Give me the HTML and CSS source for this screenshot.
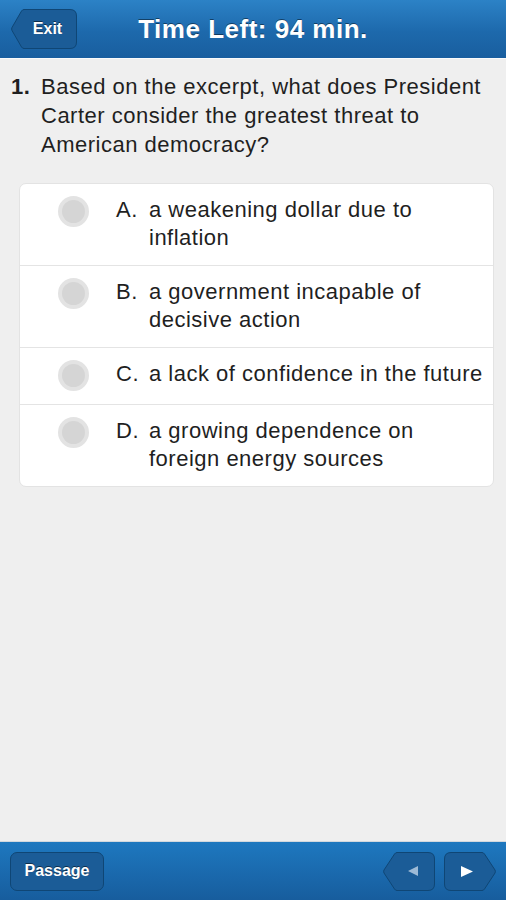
FILE: index.html
```html
<!DOCTYPE html>
<html lang="en">
<head>
    <meta charset="UTF-8">
    <meta name="viewport" content="width=device-width, initial-scale=1.0">
    <title>Practice Test</title>
    <link rel="stylesheet" href="styles.css">
</head>
<body>

<header class="topbar">
    <div class="topbar-left">
        <button class="shape-btn exit-btn">
            <svg class="shape-bg" viewBox="0 0 66 40" preserveAspectRatio="none">
                <path d="M13 0.5 H59 Q65.5 0.5 65.5 7 V33 Q65.5 39.5 59 39.5 H13 Q11.5 39.5 10.5 38 L1 21.5 Q0.2 20 1 18.5 L10.5 2 Q11.5 0.5 13 0.5 Z"/>
            </svg>
            <span class="btn-label">Exit</span>
        </button>
    </div>
    <h1 class="timer">Time Left: 94 min.</h1>
    <div></div>
</header>

<main class="content">
    <div class="question">
        <span class="q-num">1.</span>
        <p class="q-text">Based on the excerpt, what does President Carter consider the greatest threat to American democracy?</p>
    </div>

    <ul class="choices">
        <li class="choice">
            <span class="radio"></span>
            <span class="letter">A.</span>
            <span class="choice-text">a weakening dollar due to inflation</span>
        </li>
        <li class="choice">
            <span class="radio"></span>
            <span class="letter">B.</span>
            <span class="choice-text">a government incapable of decisive action</span>
        </li>
        <li class="choice">
            <span class="radio"></span>
            <span class="letter">C.</span>
            <span class="choice-text">a lack of confidence in the future</span>
        </li>
        <li class="choice">
            <span class="radio"></span>
            <span class="letter">D.</span>
            <span class="choice-text">a growing dependence on foreign energy sources</span>
        </li>
    </ul>
</main>

<footer class="bottombar">
    <button class="passage-btn">Passage</button>
    <div class="nav">
        <button class="shape-btn nav-btn">
            <svg class="shape-bg" viewBox="0 0 52 39" preserveAspectRatio="none">
                <path d="M14 0.5 H45 Q51.5 0.5 51.5 7 V32 Q51.5 38.5 45 38.5 H14 Q12.5 38.5 11.5 37 L1 21 Q0.2 19.5 1 18 L11.5 2 Q12.5 0.5 14 0.5 Z"/>
            </svg>
            <svg class="arrow arrow-off" viewBox="0 0 10 10"><path d="M10 0 V10 L0 5 Z"/></svg>
        </button>
        <button class="shape-btn nav-btn">
            <svg class="shape-bg" viewBox="0 0 52 39" preserveAspectRatio="none">
                <path d="M38 0.5 H7 Q0.5 0.5 0.5 7 V32 Q0.5 38.5 7 38.5 H38 Q39.5 38.5 40.5 37 L51 21 Q51.8 19.5 51 18 L40.5 2 Q39.5 0.5 38 0.5 Z"/>
            </svg>
            <svg class="arrow" viewBox="0 0 12 11"><path d="M0 0 V11 L12 5.5 Z"/></svg>
        </button>
    </div>
</footer>

</body>
</html>
```

FILE: styles.css
```css
* {
    box-sizing: border-box;
}
body {
    margin: 0;
    height: 100vh;
    display: flex;
    flex-direction: column;
    background-color: #efefef;
    font-family: "Liberation Sans", Arial, sans-serif;
    color: #1f1f1f;
}
button {
    font-family: inherit;
    border: none;
    background: none;
    padding: 0;
    cursor: pointer;
}

/* top bar */
.topbar {
    height: 59px;
    display: grid;
    grid-template-columns: 1fr auto 1fr;
    align-items: center;
    background: linear-gradient(#2c82c6, #1d69ac 55%, #195e9f);
    border-bottom: 1px solid #fafafa;
}
.topbar-left {
    padding-left: 11px;
    padding-bottom: 1px;
}
.timer {
    margin: 0;
    font-size: 26px;
    letter-spacing: 0.5px;
    font-weight: bold;
    color: #fff;
    text-shadow: 0 -1px 0 rgba(0, 0, 0, 0.45);
}

/* shaped buttons drawn with an svg behind the label */
.shape-btn {
    position: relative;
    display: flex;
    align-items: center;
    justify-content: center;
}
.shape-bg {
    position: absolute;
    top: 0;
    left: 0;
    width: 100%;
    height: 100%;
}
.shape-bg path {
    fill: #1b5c97;
    stroke: #0f4675;
    stroke-width: 1;
}
.exit-btn {
    width: 66px;
    height: 40px;
    padding-left: 7px;
}
.btn-label {
    position: relative;
    color: #fff;
    font-weight: bold;
    font-size: 16px;
    text-shadow: 0 -1px 0 rgba(0, 0, 0, 0.5);
}

/* question */
.content {
    flex: 1;
    padding: 13px 12px 0 11px;
}
.question {
    display: flex;
    font-size: 22px;
    letter-spacing: 0.5px;
    line-height: 29px;
}
.q-num {
    width: 30px;
    flex-shrink: 0;
    font-weight: bold;
}
.q-text {
    margin: 0;
}

/* answer choices */
.choices {
    list-style: none;
    margin: 24px 0 0 8px;
    padding: 0;
    background-color: #fff;
    border: 1px solid #e3e3e3;
    border-radius: 7px;
}
.choice {
    display: flex;
    align-items: flex-start;
    padding: 12px 8px 13px 38px;
    font-size: 22px;
    letter-spacing: 0.5px;
    line-height: 28px;
    border-bottom: 1px solid #e4e4e4;
}
.choice:last-child {
    border-bottom: none;
}
.radio {
    width: 31px;
    height: 31px;
    flex-shrink: 0;
    border-radius: 50%;
    background-color: #d5d5d5;
    border: 4px solid #e3e3e3;
    margin-right: 27px;
}
.letter {
    width: 33px;
    flex-shrink: 0;
}

/* bottom bar */
.bottombar {
    height: 59px;
    display: flex;
    align-items: center;
    justify-content: space-between;
    padding: 0 10px;
    background: linear-gradient(#1e78bf, #1a69ad 55%, #175d9d);
    border-top: 1px solid #d2d8de;
}
.passage-btn {
    width: 94px;
    height: 39px;
    border-radius: 7px;
    background-color: #1b5c97;
    border: 1px solid #0f4675;
    color: #fff;
    font-weight: bold;
    font-size: 16px;
    text-shadow: 0 -1px 0 rgba(0, 0, 0, 0.5);
}
.nav {
    display: flex;
    gap: 9px;
}
.nav-btn {
    width: 52px;
    height: 39px;
}
.arrow {
    position: relative;
    width: 12px;
    height: 11px;
    fill: #fff;
}
.arrow-off {
    width: 10px;
    height: 10px;
    margin-left: 8px;
    fill: #9dbad6;
}
.nav-btn:last-child .arrow {
    margin-right: 6px;
}
```
